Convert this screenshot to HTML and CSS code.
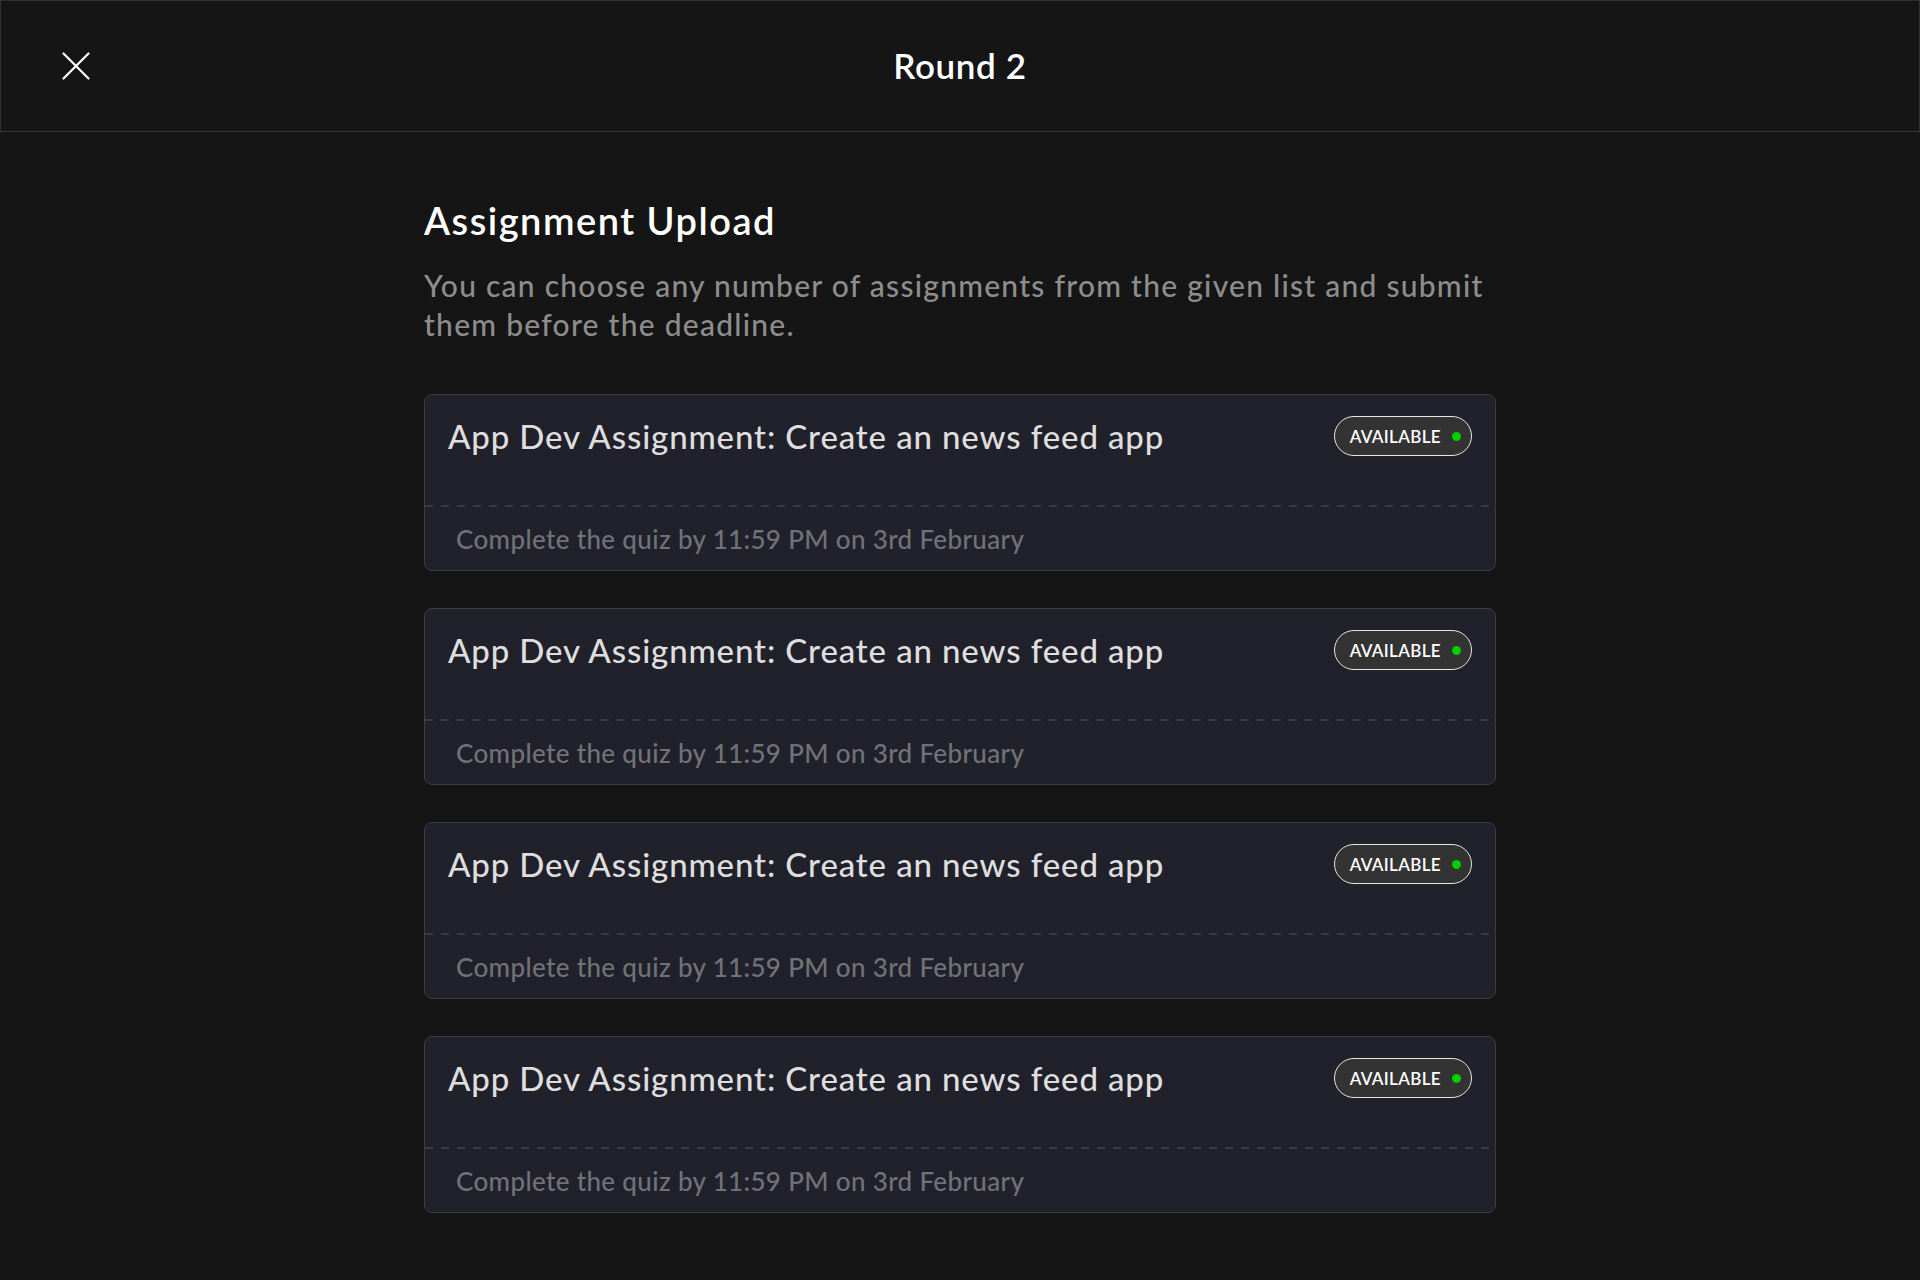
FILE: index.html
```html
<!DOCTYPE html>
<html lang="en">
<head>
<meta charset="utf-8">
<title>Round 2</title>
<link rel="stylesheet" href="styles.css">
</head>
<body>
<header class="topbar">
  <div class="topbar-left">
    <button class="close-btn" aria-label="Close">
      <svg width="28" height="28" viewBox="0 0 28 28" fill="none" stroke="#ffffff" stroke-width="2.2" stroke-linecap="round">
        <path d="M1.5 1.5 L26.5 26.5 M26.5 1.5 L1.5 26.5"/>
      </svg>
    </button>
  </div>
  <h1 class="topbar-title">Round 2</h1>
  <div class="topbar-right"></div>
</header>

<main class="content">
  <h2 class="section-title">Assignment Upload</h2>
  <p class="section-desc">You can choose any number of assignments from the given list and submit them before the deadline.</p>

  <ul class="cards">
    <li class="card">
      <div class="card-top">
        <span class="card-title">App Dev Assignment: Create an news feed app</span>
        <span class="badge">AVAILABLE<span class="dot"></span></span>
      </div>
      <div class="card-divider"></div>
      <div class="card-bottom">Complete the quiz by 11:59 PM on 3rd February</div>
    </li>
    <li class="card">
      <div class="card-top">
        <span class="card-title">App Dev Assignment: Create an news feed app</span>
        <span class="badge">AVAILABLE<span class="dot"></span></span>
      </div>
      <div class="card-divider"></div>
      <div class="card-bottom">Complete the quiz by 11:59 PM on 3rd February</div>
    </li>
    <li class="card">
      <div class="card-top">
        <span class="card-title">App Dev Assignment: Create an news feed app</span>
        <span class="badge">AVAILABLE<span class="dot"></span></span>
      </div>
      <div class="card-divider"></div>
      <div class="card-bottom">Complete the quiz by 11:59 PM on 3rd February</div>
    </li>
    <li class="card">
      <div class="card-top">
        <span class="card-title">App Dev Assignment: Create an news feed app</span>
        <span class="badge">AVAILABLE<span class="dot"></span></span>
      </div>
      <div class="card-divider"></div>
      <div class="card-bottom">Complete the quiz by 11:59 PM on 3rd February</div>
    </li>
  </ul>
</main>
</body>
</html>
```

FILE: styles.css
```css
* { box-sizing: border-box; }

html, body {
  margin: 0;
  padding: 0;
  background: #151515;
  font-family: "Lato", "Liberation Sans", sans-serif;
  color: #ffffff;
}

.topbar {
  height: 132px;
  border: 1px solid #2d3136;
  border-bottom-color: #333538;
  display: grid;
  grid-template-columns: 1fr auto 1fr;
  align-items: center;
  background: #151515;
}

.topbar-left {
  padding-left: 61px;
  display: flex;
  align-items: center;
}

.close-btn {
  background: none;
  border: 0;
  padding: 0;
  width: 28px;
  height: 28px;
  display: flex;
  cursor: pointer;
}

.topbar-title {
  margin: 0;
  font-size: 35px;
  font-weight: 600;
  letter-spacing: 0.6px;
  line-height: 40px;
  color: #ffffff;
  padding-bottom: 2px;
}

.content {
  width: 1072px;
  margin: 0 auto;
  padding-top: 66px;
  padding-bottom: 40px;
}

.section-title {
  margin: 0;
  font-size: 38px;
  font-weight: 600;
  letter-spacing: 1.5px;
  line-height: 44px;
  color: #ffffff;
}

.section-desc {
  margin: 24px 0 0;
  font-size: 30px;
  line-height: 39px;
  font-weight: 500;
  letter-spacing: 1.25px;
  color: #8d8d8d;
}

.cards {
  list-style: none;
  margin: 50px 0 0;
  padding: 0;
  display: flex;
  flex-direction: column;
  gap: 37px;
}

.card {
  background: #20212a;
  border: 1px solid #393e43;
  border-radius: 8px;
  overflow: hidden;
}

.card-top {
  display: flex;
  align-items: center;
  justify-content: space-between;
  padding: 21px 23px 49px 23px;
}

.card-title {
  font-size: 33px;
  font-weight: 500;
  letter-spacing: 0.87px;
  color: #dedede;
  line-height: 40px;
}

.badge {
  display: inline-flex;
  align-items: center;
  height: 40px;
  padding: 0 10px 0 15px;
  border: 1px solid #e6e6e6;
  border-radius: 20px;
  background: #333333;
  color: #ffffff;
  font-size: 17px;
  font-weight: 600;
  letter-spacing: 0.35px;
}

.dot {
  width: 9px;
  height: 9px;
  border-radius: 50%;
  background: #00cc00;
  margin-left: 11px;
}

.card-divider {
  height: 2px;
  background: repeating-linear-gradient(to right, #3a3d42 0 8px, transparent 8px 16px);
}

.card-bottom {
  height: 63px;
  display: flex;
  align-items: center;
  padding-left: 31px;
  font-size: 26px;
  font-weight: 500;
  letter-spacing: 0.35px;
  color: #717278;
}
```
